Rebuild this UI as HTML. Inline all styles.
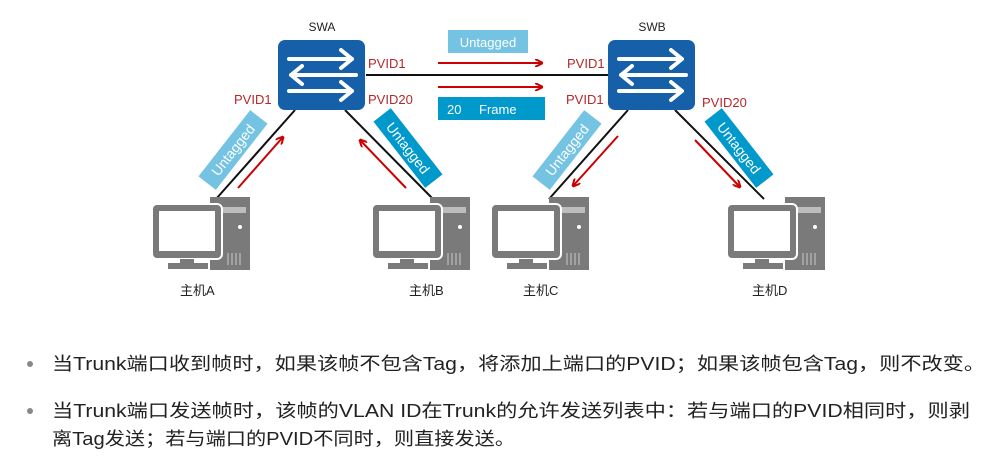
<!DOCTYPE html>
<html><head><meta charset="utf-8"><style>
body{margin:0;width:1000px;height:472px;background:#fff;overflow:hidden}
svg{display:block}
</style></head><body>
<svg width="1000" height="472" viewBox="0 0 1000 472" font-family="Liberation Sans, Noto Sans CJK SC, sans-serif">
<defs>
<g id="sw">
<rect x="0" y="0" width="87" height="70" rx="7" fill="#1560a8"/>
<g stroke="#fff" stroke-width="4" fill="none" stroke-linecap="round" stroke-linejoin="round">
<path d="M11 19 H74 M63 10 L74 19 L63 28"/>
<path d="M78 35 H13 M24 26 L13 35 L24 44"/>
<path d="M11 51 H74 M63 42 L74 51 L63 60"/>
</g>
</g>
<g id="pc">
<rect x="58" y="0" width="40" height="73" fill="#7a7a7a"/>
<rect x="62" y="10" width="32" height="6" fill="#fff" opacity=".5"/>
<circle cx="88" cy="30" r="2" fill="#fff"/>
<g stroke="#fff" stroke-width="1" opacity=".6"><line x1="76" y1="56" x2="76" y2="68"/><line x1="80" y1="56" x2="80" y2="68"/><line x1="84" y1="56" x2="84" y2="68"/><line x1="88" y1="56" x2="88" y2="68"/></g>
<rect x="0" y="7" width="70" height="55" rx="5" fill="#7a7a7a" stroke="#fff" stroke-width="2"/>
<rect x="7" y="14" width="56" height="40" fill="#fff"/>
<rect x="28" y="62" width="14" height="5" fill="#7a7a7a"/>
<rect x="16" y="66" width="40" height="6" fill="#7a7a7a"/>
</g>
<marker id="ar" markerWidth="8" markerHeight="8" refX="7" refY="4" orient="auto" markerUnits="userSpaceOnUse"><path d="M0 0 L8 4 L0 8" fill="none" stroke="#c00" stroke-width="2"/></marker>
</defs>
<g stroke="#111" stroke-width="2">
<line x1="295" y1="110" x2="216" y2="199"/>
<line x1="345" y1="110" x2="433" y2="199"/>
<line x1="366" y1="75" x2="608" y2="75"/>
<line x1="628" y1="110" x2="549" y2="199"/>
<line x1="675" y1="110" x2="764" y2="199"/>
</g>
<use href="#sw" x="278" y="40"/>
<use href="#sw" x="608" y="40"/>
<text x="322" y="31" font-size="12" text-anchor="middle" fill="#222">SWA</text>
<text x="652" y="31" font-size="12" text-anchor="middle" fill="#222">SWB</text>
<rect x="448" y="30" width="80" height="23" fill="#74c3e2"/>
<text x="488" y="47" font-size="13" fill="#fff" text-anchor="middle">Untagged</text>
<rect x="438" y="97" width="107" height="23" fill="#0099cc"/>
<text x="447" y="114" font-size="13" fill="#fff">20</text>
<text x="479" y="114" font-size="13" fill="#fff">Frame</text>
<g stroke="#c00" stroke-width="2" fill="none">
<line x1="438" y1="63" x2="542" y2="63" marker-end="url(#ar)"/>
<line x1="438" y1="87" x2="542" y2="87" marker-end="url(#ar)"/>
<line x1="238" y1="188" x2="283" y2="137" marker-end="url(#ar)"/>
<line x1="406" y1="188" x2="360" y2="140" marker-end="url(#ar)"/>
<line x1="618" y1="136" x2="573" y2="186" marker-end="url(#ar)"/>
<line x1="695" y1="140" x2="740" y2="187" marker-end="url(#ar)"/>
</g>
<g fill="#b5282a" font-size="13">
<text x="368" y="68">PVID1</text>
<text x="368" y="104">PVID20</text>
<text x="234" y="104">PVID1</text>
<text x="567" y="68">PVID1</text>
<text x="566" y="104">PVID1</text>
<text x="702" y="107">PVID20</text>
</g>
<g font-size="14" fill="#fff" text-anchor="middle">
<g transform="translate(233,150) rotate(-52)"><rect x="-42" y="-11" width="84" height="22" fill="#74c3e2"/><text y="5">Untagged</text></g>
<g transform="translate(408,148) rotate(52)"><rect x="-42" y="-11" width="84" height="22" fill="#0099cc"/><text y="5">Untagged</text></g>
<g transform="translate(567,150) rotate(-52)"><rect x="-42" y="-11" width="84" height="22" fill="#74c3e2"/><text y="5">Untagged</text></g>
<g transform="translate(739,148) rotate(52)"><rect x="-42" y="-11" width="84" height="22" fill="#0099cc"/><text y="5">Untagged</text></g>
</g>
<use href="#pc" x="152" y="197"/>
<use href="#pc" x="372" y="197"/>
<use href="#pc" x="491" y="197"/>
<use href="#pc" x="727" y="197"/>
<g font-size="13" fill="#222">
<text x="180" y="295">主机A</text>
<text x="409" y="295">主机B</text>
<text x="523" y="295">主机C</text>
<text x="752" y="295">主机D</text>
</g>
<g fill="#888"><circle cx="30" cy="364" r="3"/><circle cx="30" cy="411" r="3"/></g>
<g font-size="18" fill="#222">
<text x="52" y="370" textLength="933" lengthAdjust="spacingAndGlyphs">当Trunk端口收到帧时，如果该帧不包含Tag，将添加上端口的PVID；如果该帧包含Tag，则不改变。</text>
<text x="52" y="417" textLength="918" lengthAdjust="spacingAndGlyphs">当Trunk端口发送帧时，该帧的VLAN  ID在Trunk的允许发送列表中：若与端口的PVID相同时，则剥</text>
<text x="52" y="445" textLength="463" lengthAdjust="spacingAndGlyphs">离Tag发送；若与端口的PVID不同时，则直接发送。</text>
</g>
</svg>
</body></html>
